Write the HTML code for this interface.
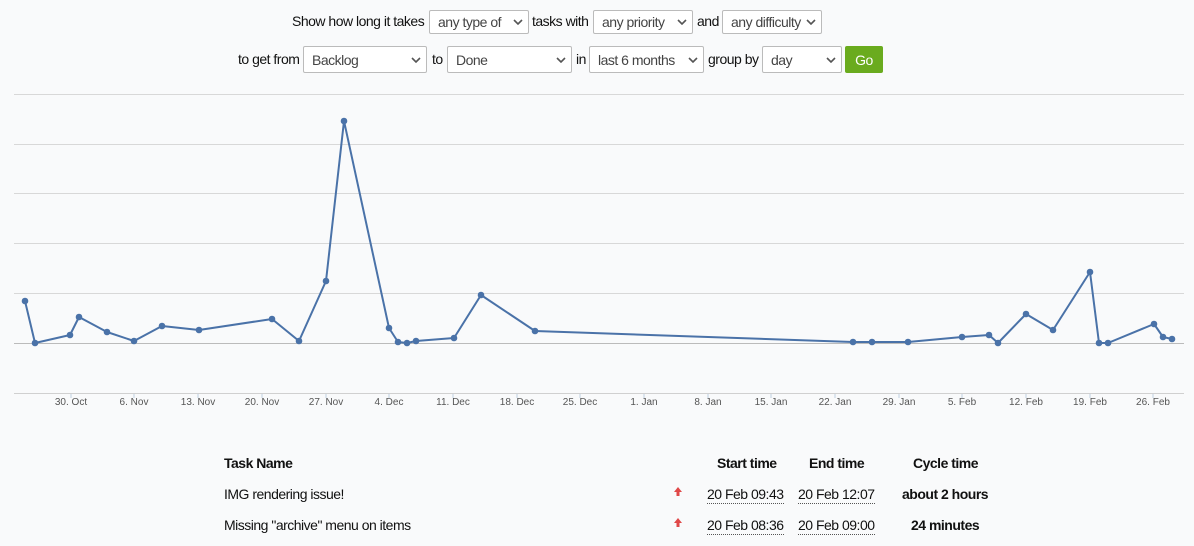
<!DOCTYPE html>
<html><head><style>
body{margin:0;background:#f9fafb;font-family:"Liberation Sans",sans-serif;font-size:14px;color:#111;width:1194px;height:546px;overflow:hidden;position:relative;letter-spacing:-0.5px}
.sel{position:absolute;height:24px;border:1px solid #bbb;background:#fff;border-radius:2px;box-sizing:border-box;display:flex;align-items:center;justify-content:space-between;padding:0 5px 0 8px;color:#444;font-size:14px;overflow:hidden;white-space:nowrap}
.sel svg{flex:none;margin-left:2px}
.go{position:absolute;background:#6aab1e;color:#fff;height:27px;width:38px;display:flex;align-items:center;justify-content:center;border-radius:2px}
.t{position:absolute;font-size:14px;white-space:nowrap}
.b{font-weight:bold}
.d{border-bottom:1px dotted #555;padding-bottom:1px}
</style></head><body>
<div class="t" style="left:292px;top:13px">Show how long it takes</div>
<div class="sel" style="left:429px;top:10px;width:100px">any type of <svg width="10" height="6"><path d="M1 1l4 4 4-4" stroke="#555" stroke-width="1.6" fill="none"/></svg></div>
<div class="t" style="left:532px;top:13px">tasks with</div>
<div class="sel" style="left:593px;top:10px;width:100px">any priority <svg width="10" height="6"><path d="M1 1l4 4 4-4" stroke="#555" stroke-width="1.6" fill="none"/></svg></div>
<div class="t" style="left:697px;top:13px">and</div>
<div class="sel" style="left:722px;top:10px;width:100px"><span style="overflow:hidden;width:76px">any difficulty</span><svg width="10" height="6"><path d="M1 1l4 4 4-4" stroke="#555" stroke-width="1.6" fill="none"/></svg></div>

<div class="t" style="left:238px;top:51px">to get from</div>
<div class="sel" style="left:303px;top:46px;width:124px;height:27px">Backlog <svg width="10" height="6"><path d="M1 1l4 4 4-4" stroke="#555" stroke-width="1.6" fill="none"/></svg></div>
<div class="t" style="left:432px;top:51px">to</div>
<div class="sel" style="left:447px;top:46px;width:125px;height:27px">Done <svg width="10" height="6"><path d="M1 1l4 4 4-4" stroke="#555" stroke-width="1.6" fill="none"/></svg></div>
<div class="t" style="left:576px;top:51px">in</div>
<div class="sel" style="left:589px;top:46px;width:115px;height:27px">last 6 months <svg width="10" height="6"><path d="M1 1l4 4 4-4" stroke="#555" stroke-width="1.6" fill="none"/></svg></div>
<div class="t" style="left:708px;top:51px">group by</div>
<div class="sel" style="left:762px;top:46px;width:80px;height:27px">day <svg width="10" height="6"><path d="M1 1l4 4 4-4" stroke="#555" stroke-width="1.6" fill="none"/></svg></div>
<div class="go" style="left:845px;top:46px">Go</div>

<svg style="position:absolute;left:0;top:0;letter-spacing:0" width="1194" height="420">
<g stroke="#d8d8d8" stroke-width="1">
<line x1="14" x2="1184" y1="94.5" y2="94.5"/><line x1="14" x2="1184" y1="144.5" y2="144.5"/><line x1="14" x2="1184" y1="193.5" y2="193.5"/><line x1="14" x2="1184" y1="243.5" y2="243.5"/><line x1="14" x2="1184" y1="293.5" y2="293.5"/>
</g>
<line x1="14" x2="1184" y1="343.5" y2="343.5" stroke="#bbb"/>
<line x1="14" x2="1184" y1="393.5" y2="393.5" stroke="#d0d0d0"/>
<g stroke="#c0d0e0"><line x1="71" x2="71" y1="394" y2="398"/><line x1="134" x2="134" y1="394" y2="398"/><line x1="198" x2="198" y1="394" y2="398"/><line x1="262" x2="262" y1="394" y2="398"/><line x1="326" x2="326" y1="394" y2="398"/><line x1="389" x2="389" y1="394" y2="398"/><line x1="453" x2="453" y1="394" y2="398"/><line x1="517" x2="517" y1="394" y2="398"/><line x1="580" x2="580" y1="394" y2="398"/><line x1="644" x2="644" y1="394" y2="398"/><line x1="708" x2="708" y1="394" y2="398"/><line x1="771" x2="771" y1="394" y2="398"/><line x1="835" x2="835" y1="394" y2="398"/><line x1="899" x2="899" y1="394" y2="398"/><line x1="962" x2="962" y1="394" y2="398"/><line x1="1026" x2="1026" y1="394" y2="398"/><line x1="1090" x2="1090" y1="394" y2="398"/><line x1="1153" x2="1153" y1="394" y2="398"/></g>
<g font-family="Liberation Sans" font-size="10" fill="#555" text-anchor="middle">
<text x="71" y="405">30. Oct</text><text x="134" y="405">6. Nov</text><text x="198" y="405">13. Nov</text><text x="262" y="405">20. Nov</text><text x="326" y="405">27. Nov</text><text x="389" y="405">4. Dec</text><text x="453" y="405">11. Dec</text><text x="517" y="405">18. Dec</text><text x="580" y="405">25. Dec</text><text x="644" y="405">1. Jan</text><text x="708" y="405">8. Jan</text><text x="771" y="405">15. Jan</text><text x="835" y="405">22. Jan</text><text x="899" y="405">29. Jan</text><text x="962" y="405">5. Feb</text><text x="1026" y="405">12. Feb</text><text x="1090" y="405">19. Feb</text><text x="1153" y="405">26. Feb</text>
</g>
<polyline fill="none" stroke="#4a72a8" stroke-width="2" stroke-linejoin="round" points="25,301 35,343 70,335 79,317 107,332 134,341 162,326 199,330 272,319 299,341 326,281 344,121 389,328 398,342 407,343 416,341 454,338 481,295 535,331 853,342 872,342 908,342 962,337 989,335 998,343 1026,314 1053,330 1090,272 1099,343 1108,343 1154,324 1163,337 1172,339"/>
<g fill="#4a72a8">
<circle cx="25" cy="301" r="3.3"/><circle cx="35" cy="343" r="3.3"/><circle cx="70" cy="335" r="3.3"/><circle cx="79" cy="317" r="3.3"/><circle cx="107" cy="332" r="3.3"/><circle cx="134" cy="341" r="3.3"/><circle cx="162" cy="326" r="3.3"/><circle cx="199" cy="330" r="3.3"/><circle cx="272" cy="319" r="3.3"/><circle cx="299" cy="341" r="3.3"/><circle cx="326" cy="281" r="3.3"/><circle cx="344" cy="121" r="3.3"/><circle cx="389" cy="328" r="3.3"/><circle cx="398" cy="342" r="3.3"/><circle cx="407" cy="343" r="3.3"/><circle cx="416" cy="341" r="3.3"/><circle cx="454" cy="338" r="3.3"/><circle cx="481" cy="295" r="3.3"/><circle cx="535" cy="331" r="3.3"/><circle cx="853" cy="342" r="3.3"/><circle cx="872" cy="342" r="3.3"/><circle cx="908" cy="342" r="3.3"/><circle cx="962" cy="337" r="3.3"/><circle cx="989" cy="335" r="3.3"/><circle cx="998" cy="343" r="3.3"/><circle cx="1026" cy="314" r="3.3"/><circle cx="1053" cy="330" r="3.3"/><circle cx="1090" cy="272" r="3.3"/><circle cx="1099" cy="343" r="3.3"/><circle cx="1108" cy="343" r="3.3"/><circle cx="1154" cy="324" r="3.3"/><circle cx="1163" cy="337" r="3.3"/><circle cx="1172" cy="339" r="3.3"/>
</g>
</svg>
<div class="t b" style="left:224px;top:455px">Task Name</div>
<div class="t b" style="left:717px;top:455px">Start time</div>
<div class="t b" style="left:809px;top:455px">End time</div>
<div class="t b" style="left:913px;top:455px">Cycle time</div>
<div class="t" style="left:224px;top:486px">IMG rendering issue!</div>
<div class="t" style="left:224px;top:517px">Missing "archive" menu on items</div>
<svg class="t" style="left:674px;top:487px" width="8" height="10"><path d="M4 0L8 5H5.5V9H2.5V5H0Z" fill="#e04848"/></svg>
<svg class="t" style="left:674px;top:518px" width="8" height="10"><path d="M4 0L8 5H5.5V9H2.5V5H0Z" fill="#e04848"/></svg>
<div class="t d" style="left:707px;top:486px">20 Feb 09:43</div>
<div class="t d" style="left:798px;top:486px">20 Feb 12:07</div>
<div class="t b" style="left:902px;top:486px">about 2 hours</div>
<div class="t d" style="left:707px;top:517px">20 Feb 08:36</div>
<div class="t d" style="left:798px;top:517px">20 Feb 09:00</div>
<div class="t b" style="left:911px;top:517px">24 minutes</div>
</body></html>
